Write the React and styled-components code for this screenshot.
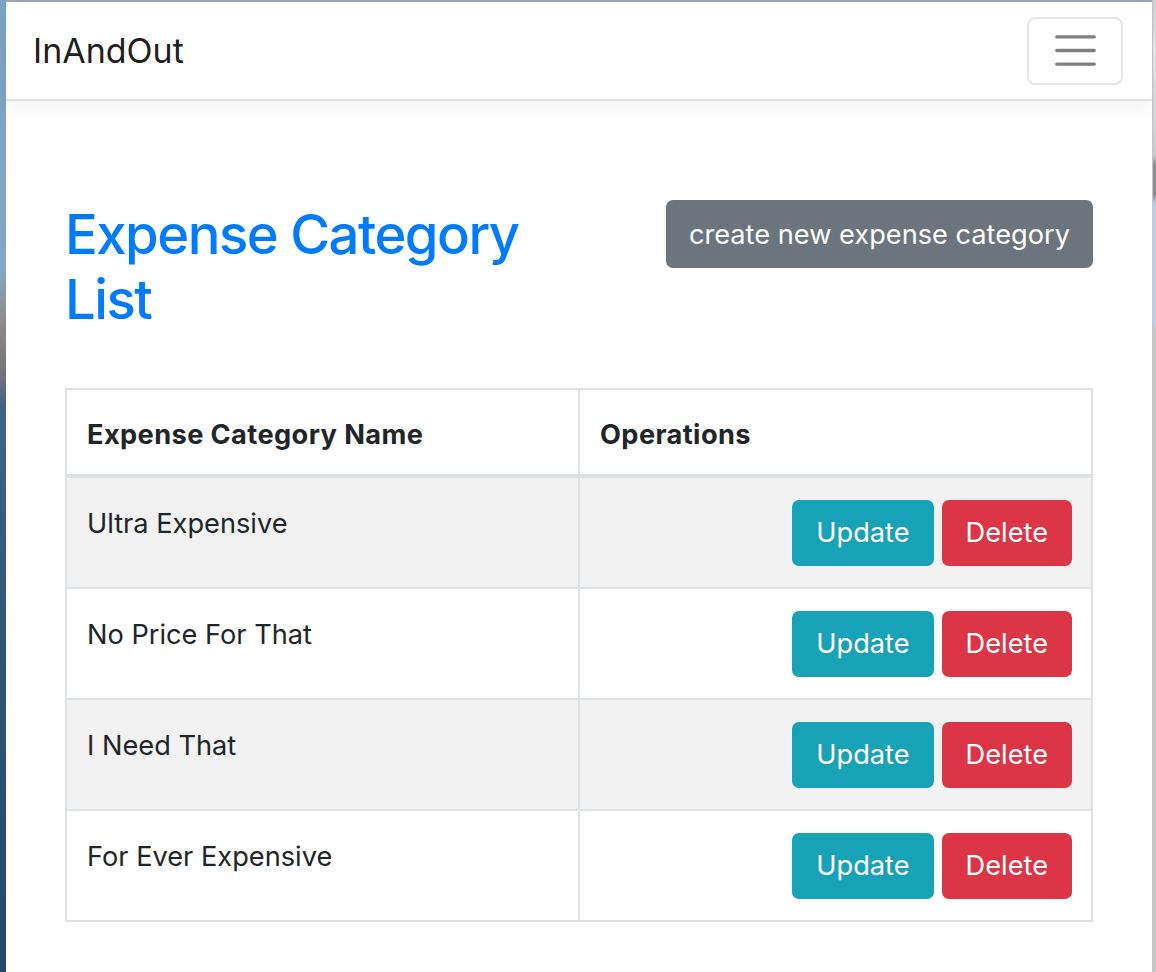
import React from "react";
import styled, { createGlobalStyle } from "styled-components";

const GlobalStyle = createGlobalStyle`
  html, body { margin: 0; padding: 0; background: #ffffff; }
  body {
    font-family: Inter, "Noto Sans", "Liberation Sans", sans-serif;
    color: #212529;
  }
  * { box-sizing: border-box; }
`;

const Screen = styled.div`
  display: flex;
  width: 1156px;
  min-height: 972px;
`;

const DesktopEdge = styled.div`
  flex: 0 0 6px;
  background: linear-gradient(
    to bottom,
    #7aa3c9 0%,
    #86a6c4 28%,
    #8d8a8c 33%,
    #7c7478 38%,
    #3f6288 42%,
    #2f5479 70%,
    #24476b 100%
  );
`;

const WindowEdge = styled.div`
  flex: 0 0 4px;
  background: linear-gradient(
    to bottom,
    #d0d0d4 0%,
    #e8e8ea 5%,
    #c9c9cc 16%,
    #8e8e92 17%,
    #8e8e92 20%,
    #c2cde0 21%,
    #c2cde0 33%,
    #c8c8c8 34%,
    #c8c8c8 100%
  );
  border-left: 1px solid #c4c4c8;
`;

const Window = styled.div`
  flex: 1;
  display: flex;
  flex-direction: column;
  background: #ffffff;
  border-top: 2px solid #9ca3b3;
`;

const Navbar = styled.nav`
  height: 99px;
  display: flex;
  align-items: center;
  justify-content: space-between;
  padding: 0 29px 0 27px;
  background: #ffffff;
  border-bottom: 2px solid #dee2e6;
  box-shadow: 0 8px 18px rgba(0, 0, 0, 0.05);
  position: relative;
  z-index: 1;
`;

const Brand = styled.a`
  font-size: 34px;
  line-height: 51px;
  color: rgba(0, 0, 0, 0.9);
  text-decoration: none;
  cursor: pointer;
`;

const Toggler = styled.button`
  width: 96px;
  height: 68px;
  padding: 0;
  display: flex;
  align-items: center;
  justify-content: center;
  background: transparent;
  border: 2px solid rgba(0, 0, 0, 0.1);
  border-radius: 8px;
  cursor: pointer;
`;

const Main = styled.main`
  padding: 99px 59px 40px;
`;

const HeaderRow = styled.div`
  display: flex;
  justify-content: space-between;
  align-items: flex-start;
`;

const Title = styled.h2`
  margin: 0;
  max-width: 500px;
  font-size: 54.4px;
  line-height: 65px;
  font-weight: 500;
  letter-spacing: -1.5px;
  color: #007bff;
  padding-top: 2px;
`;

const Button = styled.button`
  height: ${(p) => p.$h || 66}px;
  padding: 0 ${(p) => p.$px || 22}px;
  display: inline-flex;
  align-items: center;
  justify-content: center;
  font-family: inherit;
  font-size: 27.2px;
  font-weight: 400;
  color: #ffffff;
  background: ${(p) => p.$bg};
  border: 2px solid ${(p) => p.$bg};
  border-radius: 7px;
  cursor: pointer;
  white-space: nowrap;
`;

const Table = styled.table`
  width: 100%;
  margin-top: 56px;
  border-collapse: collapse;
  table-layout: fixed;
  font-size: 27.2px;
  line-height: 40.8px;
  color: #212529;
`;

const Th = styled.th`
  text-align: left;
  font-weight: 700;
  letter-spacing: 0.4px;
  padding: 25px 20px 18px;
  border: 2px solid #dee2e6;
  border-bottom-width: 4px;
  vertical-align: top;
`;

const Tr = styled.tr`
  background: ${(p) => (p.$striped ? "#f2f2f2" : "#ffffff")};
`;

const Td = styled.td`
  padding: ${(p) => (p.$actions ? "22px 20px 21px" : "26px 20px 10px")};
  border: 2px solid #dee2e6;
  vertical-align: top;
`;

const Actions = styled.div`
  display: flex;
  justify-content: flex-end;
  gap: 8px;
  margin-right: -1px;
`;

const HamburgerIcon = () => (
  <svg width="51" height="51" viewBox="0 0 30 30" aria-hidden="true">
    <path
      d="M4 7h22M4 15h22M4 23h22"
      stroke="rgba(0,0,0,0.5)"
      strokeWidth="2"
      strokeLinecap="round"
      strokeMiterlimit="10"
      fill="none"
    />
  </svg>
);

const categories = [
  "Ultra Expensive",
  "No Price For That",
  "I Need That",
  "For Ever Expensive",
];

export default function App() {
  return (
    <>
      <GlobalStyle />
      <Screen>
        <DesktopEdge />
        <Window>
          <Navbar>
            <Brand>InAndOut</Brand>
            <Toggler aria-label="Toggle navigation">
              <HamburgerIcon />
            </Toggler>
          </Navbar>
          <Main>
            <HeaderRow>
              <Title>Expense Category List</Title>
              <Button $bg="#6c757d" $h={68} $px={21}>
                create new expense category
              </Button>
            </HeaderRow>
            <Table>
              <thead>
                <tr>
                  <Th>Expense Category Name</Th>
                  <Th>Operations</Th>
                </tr>
              </thead>
              <tbody>
                {categories.map((name, i) => (
                  <Tr key={name} $striped={i % 2 === 0}>
                    <Td>{name}</Td>
                    <Td $actions>
                      <Actions>
                        <Button $bg="#17a2b8">Update</Button>
                        <Button $bg="#dc3545">Delete</Button>
                      </Actions>
                    </Td>
                  </Tr>
                ))}
              </tbody>
            </Table>
          </Main>
        </Window>
        <WindowEdge />
      </Screen>
    </>
  );
}
